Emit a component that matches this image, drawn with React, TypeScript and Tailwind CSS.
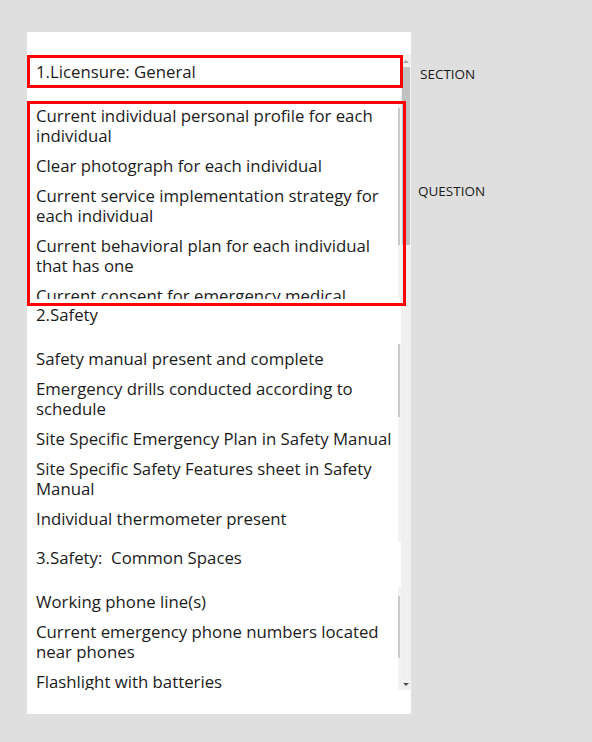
import React from "react";

type Section = {
  title: string;
  questions: string[];
  thumbTop: number;
  thumbHeight: number;
};

const sections: Section[] = [
  {
    title: "1.Licensure: General",
    questions: [
      "Current individual personal profile for each individual",
      "Clear photograph for each individual",
      "Current service implementation strategy for each individual",
      "Current behavioral plan for each individual that has one",
      "Current consent for emergency medical treatment for each individual",
    ],
    thumbTop: 7,
    thumbHeight: 137,
  },
  {
    title: "2.Safety",
    questions: [
      "Safety manual present and complete",
      "Emergency drills conducted according to schedule",
      "Site Specific Emergency Plan in Safety Manual",
      "Site Specific Safety Features sheet in Safety Manual",
      "Individual thermometer present",
    ],
    thumbTop: 0,
    thumbHeight: 73,
  },
  {
    title: "3.Safety:  Common Spaces",
    questions: [
      "Working phone line(s)",
      "Current emergency phone numbers located near phones",
      "Flashlight with batteries",
    ],
    thumbTop: 9,
    thumbHeight: 62,
  },
];

function QuestionList({ section }: { section: Section }) {
  return (
    <div className="flex h-[198px]">
      <div className="flex-1 overflow-hidden">
        {section.questions.map((q) => (
          <div key={q} className="py-[5px] pl-[9px] pr-[2px] leading-[20px]">
            {q}
          </div>
        ))}
      </div>
      <div className="w-[3px] bg-[#f3f3f3]">
        <div
          className="w-[2px] bg-[#c9c9c9]"
          style={{ marginTop: section.thumbTop, height: section.thumbHeight }}
        />
      </div>
    </div>
  );
}

export default function App() {
  return (
    <div
      className="relative w-[592px] min-h-[742px] bg-[#dfdfdf] text-[#1b1b1b]"
      style={{ fontFamily: '"Open Sans", "Noto Sans", sans-serif' }}
    >
      <div className="flex pt-[32px] pl-[27px]">
        <div className="w-[384px] h-[682px] bg-white pt-[23px]">
          <div className="flex h-[635px]">
            <div className="flex-1 overflow-hidden pt-[1px] text-[16.8px]">
              {sections.map((s) => (
                <div key={s.title}>
                  <div className="h-[45px] pt-[6px] pl-[9px] leading-[20px] whitespace-pre">
                    {s.title}
                  </div>
                  <QuestionList section={s} />
                </div>
              ))}
            </div>
            <div className="w-[10px] bg-[#f0f0f0] flex flex-col items-center">
              <div className="mt-[5px] h-0 w-0 border-x-[3px] border-b-[3px] border-x-transparent border-b-[#a3a3a3]" />
              <div className="mt-[4px] h-[178px] w-[8px] bg-[#c1c1c1]" />
              <div className="flex-1" />
              <div className="mb-[4px] h-0 w-0 border-x-[3px] border-t-[3px] border-x-transparent border-t-[#505050]" />
            </div>
          </div>
        </div>
        <div className="pl-[9px] text-[13.5px] leading-[18px] text-[#1b1b1b]">
          <div className="mt-[33px]">SECTION</div>
          <div className="mt-[99px] -ml-[2px]">QUESTION</div>
        </div>
      </div>

      {/* annotation outlines */}
      <div className="absolute left-[27px] top-[55px] w-[376px] h-[33px] border-[3px] border-[#ff0000]" />
      <div className="absolute left-[27px] top-[101px] w-[379px] h-[205px] border-[3px] border-[#ff0000]" />
    </div>
  );
}
